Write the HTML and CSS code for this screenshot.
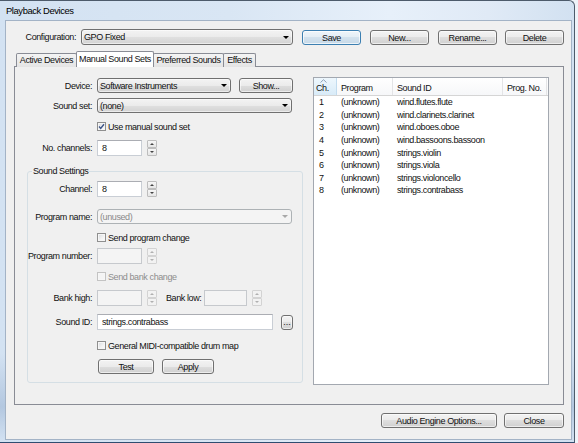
FILE: index.html
```html
<!DOCTYPE html>
<html lang="en">
<head>
<meta charset="utf-8">
<title>Playback Devices</title>
<link rel="stylesheet" href="styles.css">
</head>
<body>
<div class="window">
  <div class="titlebar">Playback Devices</div>
  <div class="client">
    <div class="config-row">
      <div class="config-label">Configuration:</div>
      <div class="combo combo-config"><span class="combo-text">GPO Fixed</span><span class="arrow"></span></div>
      <div class="btn btn-default btn-top gap10">Save</div>
      <div class="btn btn-top gap9">New...</div>
      <div class="btn btn-top gap9">Rename...</div>
      <div class="btn btn-top gap8">Delete</div>
    </div>
    <div class="tabs">
      <div class="tab tab-w1">Active Devices</div>
      <div class="tab tab-sel">Manual Sound Sets</div>
      <div class="tab tab-w3">Preferred Sounds</div>
      <div class="tab tab-w4">Effects</div>
    </div>
    <div class="panel">
      <div class="left-col">
        <div class="row h15 mt11">
          <div class="lbl lbl-top">Device:</div>
          <div class="combo combo-device"><span class="combo-text">Software Instruments</span><span class="arrow"></span></div>
          <div class="btn btn-show">Show...</div>
        </div>
        <div class="row h15 mt5">
          <div class="lbl lbl-top">Sound set:</div>
          <div class="combo combo-wide"><span class="combo-text">(none)</span><span class="arrow"></span></div>
        </div>
        <div class="row h9 mt9 chk-top">
          <span class="checkbox"><svg width="7" height="7" viewBox="0 0 7 7"><path d="M1 3.6 L2.7 5.4 L6 1.2" fill="none" stroke="#3c5488" stroke-width="1.4"/></svg></span>
          <span class="chk-label">Use manual sound set</span>
        </div>
        <div class="row h16 mt9">
          <div class="lbl lbl-top">No. channels:</div>
          <div class="textbox tb-num">8</div>
          <div class="spinner"><span class="spin"><i class="tri-up"></i></span><span class="spin"><i class="tri-down"></i></span></div>
        </div>
        <div class="group">
          <div class="group-title">Sound Settings</div>
          <div class="row h16 mt9">
            <div class="lbl lbl-grp">Channel:</div>
            <div class="textbox tb-num">8</div>
            <div class="spinner"><span class="spin"><i class="tri-up"></i></span><span class="spin"><i class="tri-down"></i></span></div>
          </div>
          <div class="row h15 mt12">
            <div class="lbl lbl-grp">Program name:</div>
            <div class="combo combo-wide combo-disabled"><span class="combo-text">(unused)</span><span class="arrow"></span></div>
          </div>
          <div class="row h9 mt9 chk-grp">
            <span class="checkbox"></span>
            <span class="chk-label">Send program change</span>
          </div>
          <div class="row h16 mt6">
            <div class="lbl lbl-grp">Program number:</div>
            <div class="textbox tb-num tb-disabled"></div>
            <div class="spinner spinner-disabled"><span class="spin"><i class="tri-up"></i></span><span class="spin"><i class="tri-down"></i></span></div>
          </div>
          <div class="row h9 mt8 chk-grp">
            <span class="checkbox checkbox-disabled"></span>
            <span class="chk-label disabled-text">Send bank change</span>
          </div>
          <div class="row h16 mt9">
            <div class="lbl lbl-grp">Bank high:</div>
            <div class="textbox tb-num tb-disabled"></div>
            <div class="spinner spinner-disabled"><span class="spin"><i class="tri-up"></i></span><span class="spin"><i class="tri-down"></i></span></div>
            <div class="lbl-inline">Bank low:</div>
            <div class="textbox tb-num2 tb-disabled"></div>
            <div class="spinner spinner-disabled"><span class="spin"><i class="tri-up"></i></span><span class="spin"><i class="tri-down"></i></span></div>
          </div>
          <div class="row h16 mt8">
            <div class="lbl lbl-grp">Sound ID:</div>
            <div class="textbox tb-soundid">strings.contrabass</div>
            <div class="btn btn-dots">...</div>
          </div>
          <div class="row h9 mt11 chk-grp">
            <span class="checkbox"></span>
            <span class="chk-label">General MIDI-compatible drum map</span>
          </div>
          <div class="row h15 mt9 btn-row">
            <div class="btn btn-test">Test</div>
            <div class="btn btn-apply">Apply</div>
          </div>
        </div>
      </div>
      <div class="list">
        <div class="list-head">
          <div class="hc hc-ch"><svg class="sort-arrow" width="7" height="4" viewBox="0 0 7 4"><path d="M0.5 3.5 L3.5 0.7 L6.5 3.5" fill="none" stroke="#8da2b8" stroke-width="1"/></svg>Ch.</div>
          <div class="hc hc-prog">Program</div>
          <div class="hc hc-sid">Sound ID</div>
          <div class="hc hc-pno">Prog. No.</div>
        </div>
        <div class="lr"><span class="c1">1</span><span class="c2">(unknown)</span><span class="c3">wind.flutes.flute</span></div>
        <div class="lr"><span class="c1">2</span><span class="c2">(unknown)</span><span class="c3">wind.clarinets.clarinet</span></div>
        <div class="lr"><span class="c1">3</span><span class="c2">(unknown)</span><span class="c3">wind.oboes.oboe</span></div>
        <div class="lr"><span class="c1">4</span><span class="c2">(unknown)</span><span class="c3">wind.bassoons.bassoon</span></div>
        <div class="lr"><span class="c1">5</span><span class="c2">(unknown)</span><span class="c3">strings.violin</span></div>
        <div class="lr"><span class="c1">6</span><span class="c2">(unknown)</span><span class="c3">strings.viola</span></div>
        <div class="lr"><span class="c1">7</span><span class="c2">(unknown)</span><span class="c3">strings.violoncello</span></div>
        <div class="lr"><span class="c1">8</span><span class="c2">(unknown)</span><span class="c3">strings.contrabass</span></div>
      </div>
    </div>
    <div class="bottom-row">
      <div class="btn btn-audio">Audio Engine Options...</div>
      <div class="btn btn-close">Close</div>
    </div>
  </div>
</div>
</body>
</html>
```

FILE: styles.css
```css
* { box-sizing: border-box; }
html, body { margin: 0; padding: 0; }
body {
  width: 578px;
  height: 443px;
  overflow: hidden;
  background: #eef3f9;
  font-family: "Liberation Sans", Arial, sans-serif;
  font-size: 9px;
  letter-spacing: -0.4px;
  color: #111;
}
.window {
  width: 575px;
  height: 443px;
  border-top: 1px solid #4d5b6b;
  border-right: 1px solid #4d5b6b;
  border-bottom: 1px solid #2f4d70;
  border-top-right-radius: 6px;
  background:
    linear-gradient(to bottom, rgba(255,255,255,0) 0%, rgba(255,255,255,0) 80%, rgba(120,150,190,0.35) 92%, rgba(255,255,255,0) 100%),
    linear-gradient(to right, #d3e2f2 0%, #d9e6f4 40%, #e7f0fa 68%, #e0eaf6 85%, #d2e1f1 100%);
  display: flex;
  flex-direction: column;
}
.titlebar {
  height: 19px;
  padding-left: 6px;
  display: flex;
  align-items: center;
  font-size: 9.4px;
  color: #000;
}
.client {
  margin-left: 5px;
  width: 567px;
  height: 420px;
  border: 1px solid #a3b3c6;
  background: #f0f0f0;
  padding: 8px 7px 0 8px;
}
.config-row {
  display: flex;
  align-items: flex-start;
  height: 16px;
}
.config-label {
  width: 67px;
  padding-right: 5px;
  text-align: right;
  line-height: 16px;
}
.combo {
  height: 15px;
  border: 1px solid #707070;
  border-radius: 3px;
  background: linear-gradient(#f3f3f3 0%, #ebebeb 50%, #e0e0e0 50%, #d3d3d3 100%);
  box-shadow: inset 0 0 0 1px rgba(255,255,255,0.55);
  display: flex;
  align-items: center;
  padding-left: 2px;
}
.combo-text { flex: 1; white-space: nowrap; overflow: hidden; }
.arrow {
  width: 0;
  height: 0;
  border-left: 3px solid transparent;
  border-right: 3px solid transparent;
  border-top: 3px solid #000;
  margin-right: 3px;
}
.combo-config { width: 212px; height: 16px; }
.combo-device { width: 134px; }
.combo-wide { width: 195px; }
.combo-disabled {
  background: #f4f4f4;
  border-color: #adb2b5;
  box-shadow: none;
  color: #8a8a8a;
}
.combo-disabled .arrow { border-top-color: #a8a8a8; }

.btn {
  height: 15px;
  border: 1px solid #707070;
  border-radius: 3px;
  background: linear-gradient(#f3f3f3 0%, #ebebeb 50%, #dedede 50%, #d0d0d0 100%);
  box-shadow: inset 0 0 0 1px rgba(255,255,255,0.6);
  display: flex;
  align-items: center;
  justify-content: center;
  white-space: nowrap;
  color: #111;
}
.btn-default {
  border-color: #3c7fb1;
  background: linear-gradient(#eef5fa 0%, #e3edf5 50%, #d3e2ee 50%, #c6d9e8 100%);
  box-shadow: inset 0 0 0 1px rgba(255,255,255,0.7);
}
.btn-top { width: 59px; margin-top: 1px; }
.gap10 { margin-left: 9px; }
.gap9 { margin-left: 9px; }
.gap8 { margin-left: 8px; }

.tabs {
  display: flex;
  align-items: flex-end;
  height: 16px;
  margin-top: 6px;
  padding-left: 2px;
}
.tab {
  height: 14px;
  border: 1px solid #898c95;
  border-bottom: none;
  border-radius: 2px 2px 0 0;
  background: linear-gradient(#f4f4f4, #e4e4e4);
  display: flex;
  align-items: center;
  justify-content: center;
  margin-left: -1px;
  white-space: nowrap;
  padding-bottom: 1px;
}
.tab-w1 { width: 61px; margin-left: 0; }
.tab-sel {
  width: 78px;
  height: 16px;
  background: #ffffff;
  position: relative;
  z-index: 1;
  padding-bottom: 2px;
}
.tab-w3 { width: 71px; }
.tab-w4 { width: 33px; }

.panel {
  margin-top: -1px;
  width: 550px;
  height: 339px;
  border: 1px solid #898c95;
  background: #f0f0f0;
  display: flex;
  align-items: flex-start;
}
.left-col {
  width: 288px;
  display: flex;
  flex-direction: column;
}
.row { display: flex; align-items: center; }
.h9 { height: 9px; }
.h15 { height: 15px; }
.h16 { height: 16px; }
.mt5 { margin-top: 5px; }
.mt6 { margin-top: 6px; }
.mt8 { margin-top: 8px; }
.mt9 { margin-top: 9px; }
.mt11 { margin-top: 11px; }
.mt12 { margin-top: 12px; }
.lbl { text-align: right; padding-right: 5px; white-space: nowrap; }
.lbl-top { width: 82px; }
.lbl-grp { width: 69px; }
.lbl-inline { margin-left: 9px; width: 38px; white-space: nowrap; }
.chk-top { padding-left: 82px; }
.chk-grp { padding-left: 69px; }
.checkbox {
  width: 9px;
  height: 9px;
  border: 1px solid #8f8f8f;
  background: linear-gradient(135deg, #d6d9de 0%, #f3f3f3 60%, #fbfbfb 100%);
  box-shadow: inset 0 0 0 1px #f6f6f6;
  display: flex;
  align-items: center;
  justify-content: center;
  flex: none;
}
.checkbox-disabled {
  border-color: #c3c3c3;
  background: #f4f4f4;
}
.chk-label { margin-left: 2px; white-space: nowrap; }
.disabled-text { color: #8d8d8d; }
.btn-show { width: 54px; margin-left: 8px; }

.textbox {
  height: 16px;
  border: 1px solid #c9ced5;
  border-top-color: #abadb3;
  background: #ffffff;
  padding-left: 4px;
  display: flex;
  align-items: center;
  white-space: nowrap;
}
.tb-num { width: 45px; }
.tb-num2 { width: 43px; }
.tb-soundid { width: 176px; }
.tb-disabled {
  background: #f4f4f4;
  border-color: #c6c9cd;
}
.spinner {
  margin-left: 5px;
  width: 10px;
  height: 16px;
  display: flex;
  flex-direction: column;
}
.spin {
  height: 8px;
  border: 1px solid #bdbdbd;
  border-radius: 1px;
  background: linear-gradient(#f6f6f6, #e6e6e6);
  display: flex;
  align-items: center;
  justify-content: center;
}
.tri-up {
  width: 0; height: 0;
  border-left: 2px solid transparent;
  border-right: 2px solid transparent;
  border-bottom: 2px solid #444;
}
.tri-down {
  width: 0; height: 0;
  border-left: 2px solid transparent;
  border-right: 2px solid transparent;
  border-top: 2px solid #444;
}
.spinner-disabled .spin { border-color: #d3d3d3; background: #f2f2f2; }
.spinner-disabled .tri-up { border-bottom-color: #b0b0b0; }
.spinner-disabled .tri-down { border-top-color: #b0b0b0; }
.btn-dots { width: 12px; margin-left: 8px; letter-spacing: 0; }

.group {
  position: relative;
  margin-top: 15px;
  margin-left: 12px;
  width: 276px;
  height: 212px;
  border: 1px solid #d5dfe5;
  border-radius: 3px;
  display: flex;
  flex-direction: column;
}
.group-title {
  position: absolute;
  top: -6px;
  left: 4px;
  padding: 0 1px;
  background: #f0f0f0;
  line-height: 10px;
  white-space: nowrap;
}
.btn-row { padding-left: 70px; }
.btn-test { width: 56px; }
.btn-apply { width: 52px; margin-left: 8px; }

.list {
  margin-left: 10px;
  margin-top: 10px;
  width: 236px;
  height: 308px;
  border: 1px solid #a3a8b0;
  background: #ffffff;
}
.list-head {
  display: flex;
  height: 18px;
  border-bottom: 1px solid #d5d5d5;
  background: linear-gradient(#ffffff, #f6f7f9);
}
.hc {
  height: 17px;
  border-right: 1px solid #e3e4e6;
  display: flex;
  align-items: center;
  padding-left: 4px;
  padding-top: 3px;
  white-space: nowrap;
}
.hc-ch {
  width: 23px;
  padding-left: 2px;
  position: relative;
  background: linear-gradient(#eef7fd, #d8ebf8);
  border-right-color: #c2dcef;
}
.sort-arrow { position: absolute; top: 1px; left: 6px; }
.hc-prog { width: 56px; }
.hc-sid { width: 110px; }
.hc-pno { width: 44px; }
.lr {
  display: flex;
  align-items: center;
  height: 12.6px;
  white-space: nowrap;
}
.c1 { width: 23px; padding-left: 5px; }
.c2 { width: 56px; padding-left: 4px; }
.c3 { width: 110px; padding-left: 4px; }

.bottom-row {
  display: flex;
  justify-content: flex-end;
  margin-top: 8px;
}
.btn-audio { width: 116px; }
.btn-close { width: 60px; margin-left: 7px; }
```
